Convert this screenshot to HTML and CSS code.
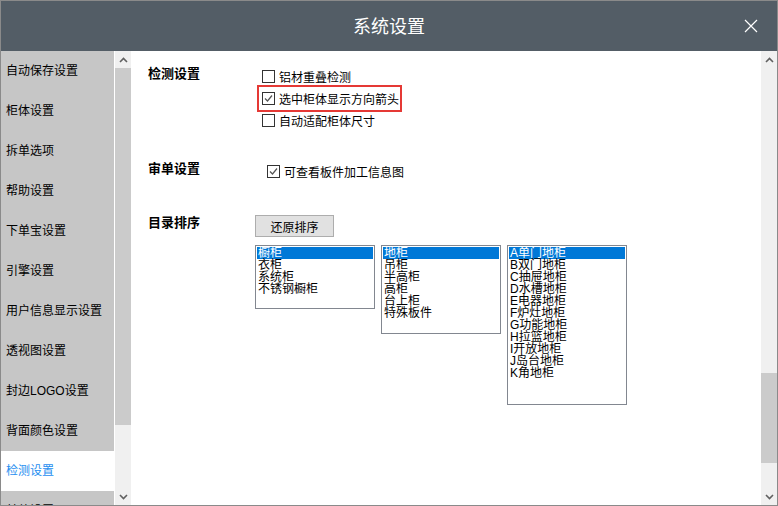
FILE: index.html
```html
<!DOCTYPE html>
<html>
	<head>
		<meta charset="UTF-8">
		<title>系统设置</title>
		<link rel="stylesheet" href="styles.css">
	</head>
	<body>
		<div class="win">
			<div class="titlebar">
				<span></span>
				<span class="title">系统设置</span>
				<span class="close">
					<svg width="14" height="14" viewBox="0 0 14 14"><path d="M1 1L13 13M13 1L1 13" stroke="#fff" stroke-width="1.2" fill="none"/></svg>
				</span>
			</div>
			<div class="content">
				<ul class="side">
					<li>自动保存设置</li>
					<li>柜体设置</li>
					<li>拆单选项</li>
					<li>帮助设置</li>
					<li>下单宝设置</li>
					<li>引擎设置</li>
					<li>用户信息显示设置</li>
					<li>透视图设置</li>
					<li>封边LOGO设置</li>
					<li>背面颜色设置</li>
					<li class="active">检测设置</li>
					<li>其他设置</li>
				</ul>
				<div class="vscroll">
					<div class="arrow"><svg width="9" height="6" viewBox="0 0 9 6"><path d="M1 5L4.5 1.5L8 5" stroke="#606060" stroke-width="1.6" fill="none"/></svg></div>
					<div class="thumb side-thumb"></div>
					<div class="track"></div>
					<div class="arrow"><svg width="9" height="6" viewBox="0 0 9 6"><path d="M1 1L4.5 4.5L8 1" stroke="#606060" stroke-width="1.6" fill="none"/></svg></div>
				</div>
				<div class="main">
					<div class="sec sec-check">
						<div class="sec-label">检测设置</div>
						<div class="sec-body">
							<div class="opt"><span class="cb"></span>铝材重叠检测</div>
							<div class="opt mark"><span class="cb"><svg width="9" height="9" viewBox="0 0 9 9"><path d="M1 4.5L3.5 7L8 1.5" stroke="#555" stroke-width="1.2" fill="none"/></svg></span>选中柜体显示方向箭头</div>
							<div class="opt"><span class="cb"></span>自动适配柜体尺寸</div>
						</div>
					</div>
					<div class="sec sec-audit">
						<div class="sec-label">审单设置</div>
						<div class="sec-body">
							<div class="opt"><span class="cb"><svg width="9" height="9" viewBox="0 0 9 9"><path d="M1 4.5L3.5 7L8 1.5" stroke="#555" stroke-width="1.2" fill="none"/></svg></span>可查看板件加工信息图</div>
						</div>
					</div>
					<div class="sec sec-order">
						<div class="sec-label">目录排序</div>
						<div class="sec-body">
							<button class="btn">还原排序</button>
							<div class="lists">
								<ul class="listbox lb1">
									<li class="sel">橱柜</li>
									<li>衣柜</li>
									<li>系统柜</li>
									<li>不锈钢橱柜</li>
								</ul>
								<ul class="listbox lb2">
									<li class="sel">地柜</li>
									<li>吊柜</li>
									<li>半高柜</li>
									<li>高柜</li>
									<li>台上柜</li>
									<li>特殊板件</li>
								</ul>
								<ul class="listbox lb3">
									<li class="sel">A单门地柜</li>
									<li>B双门地柜</li>
									<li>C抽屉地柜</li>
									<li>D水槽地柜</li>
									<li>E电器地柜</li>
									<li>F炉灶地柜</li>
									<li>G功能地柜</li>
									<li>H拉篮地柜</li>
									<li>I开放地柜</li>
									<li>J岛台地柜</li>
									<li>K角地柜</li>
								</ul>
							</div>
						</div>
					</div>
				</div>
				<div class="vscroll">
					<div class="arrow"><svg width="9" height="6" viewBox="0 0 9 6"><path d="M1 5L4.5 1.5L8 5" stroke="#606060" stroke-width="1.6" fill="none"/></svg></div>
					<div class="track main-track"></div>
					<div class="thumb main-thumb"></div>
					<div class="track"></div>
					<div class="arrow"><svg width="9" height="6" viewBox="0 0 9 6"><path d="M1 1L4.5 4.5L8 1" stroke="#606060" stroke-width="1.6" fill="none"/></svg></div>
				</div>
			</div>
		</div>
	</body>
</html>
```

FILE: styles.css
```css
* {
	margin: 0;
	padding: 0;
	box-sizing: border-box;
}
body {
	width: 778px;
	height: 506px;
	overflow: hidden;
	font-family: "Liberation Sans", "Noto Sans CJK SC", sans-serif;
	font-size: 12px;
	color: #000;
}
ul {
	list-style: none;
}
.win {
	width: 778px;
	height: 506px;
	border: 1px solid #8a8a8a;
	display: flex;
	flex-direction: column;
	background: #fff;
}
.titlebar {
	height: 50px;
	background-color: #535d66;
	display: grid;
	grid-template-columns: 1fr auto 1fr;
	align-items: center;
}
.title {
	color: #fff;
	font-size: 18px;
	line-height: 22px;
	padding-bottom: 2px;
	font-family: "Noto Sans CJK SC", sans-serif;
}
.close {
	justify-self: end;
	display: flex;
	padding-right: 19px;
}
.content {
	flex: 1;
	display: flex;
	min-height: 0;
}
.side {
	width: 114px;
	background-color: #c6c6c6;
	border-right: 1px solid #fff;
	overflow: hidden;
}
.side li {
	height: 40px;
	line-height: 40px;
	padding-left: 5px;
	white-space: nowrap;
}
.side li.active {
	background-color: #fff;
	color: #1e8ef0;
}
.vscroll {
	width: 16px;
	background-color: #f0f0f0;
	display: flex;
	flex-direction: column;
}
.vscroll .arrow {
	height: 17px;
	display: flex;
	align-items: center;
	justify-content: center;
}
.vscroll .track {
	flex: 1;
}
.vscroll .thumb {
	background-color: #cbcbcb;
}
.side-thumb {
	height: 357px;
}
.main-track {
	flex: 0 0 305px !important;
}
.main-thumb {
	height: 90px;
}
.main {
	flex: 1;
	padding: 11px 0 0 17px;
}
.sec {
	display: flex;
}
.sec-label {
	width: 107px;
	line-height: 22px;
	font-size: 13px;
	font-weight: bold;
	font-family: "Noto Sans CJK SC", sans-serif;
}
.sec-body {
	padding-top: 3px;
}
.sec-check .sec-body {
	padding-left: 7px;
}
.sec-audit {
	margin-top: 26px;
}
.sec-audit .sec-body {
	padding-left: 12px;
}
.sec-order {
	margin-top: 29px;
}
.sec-order .sec-body {
	padding-top: 4px;
}
.opt {
	height: 22px;
	display: flex;
	align-items: center;
	width: max-content;
}
.mark {
	position: relative;
}
.mark::after {
	content: "";
	position: absolute;
	left: -5px;
	right: -3px;
	top: -2px;
	bottom: -3px;
	border: 2px solid #e53935;
}
.cb {
	width: 13px;
	height: 13px;
	border: 1px solid #333;
	background: #fff;
	margin-right: 4px;
	display: flex;
	align-items: center;
	justify-content: center;
}
.btn {
	display: block;
	width: 79px;
	height: 22px;
	background-color: #e1e1e1;
	border: 1px solid #adadad;
	font-family: "Noto Sans CJK SC", sans-serif;
	font-size: 12px;
	color: #000;
}
.lists {
	display: flex;
	align-items: flex-start;
	gap: 6px;
	margin-top: 8px;
}
.listbox {
	width: 120px;
	border: 1px solid #828790;
	padding: 1px;
}
.listbox li {
	height: 12px;
	line-height: 12px;
	padding-left: 1px;
	white-space: nowrap;
}
.listbox li.sel {
	background-color: #0078d7;
	color: #fff;
}
.lb1 {
	height: 64px;
}
.lb2 {
	height: 89px;
}
.lb3 {
	height: 160px;
}
```
